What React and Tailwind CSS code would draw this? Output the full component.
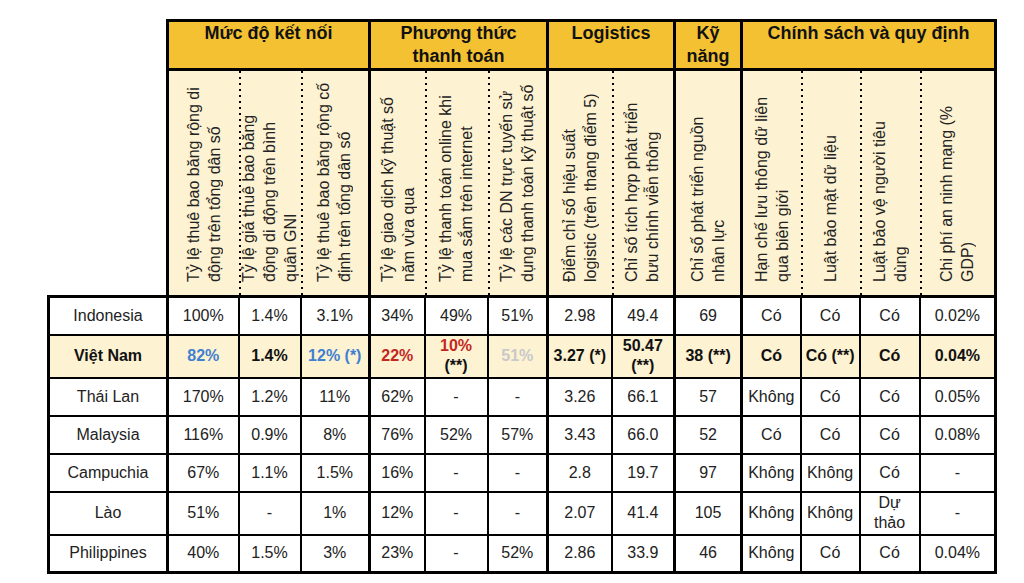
import React from "react";

const cols = [119, 71, 62, 69, 55, 63, 60, 64, 63, 67, 59, 59, 60, 76];
const thickLeft = new Set([1, 4, 7, 9, 10]);

const groups = [
  { label: ["Mức độ kết nối"], span: 3 },
  { label: ["Phương thức", "thanh toán"], span: 3 },
  { label: ["Logistics"], span: 2 },
  { label: ["Kỹ", "năng"], span: 1 },
  { label: ["Chính sách và quy định"], span: 4 },
];

const subs = [
  ["Tỷ lệ thuê bao băng rộng di", "động trên tổng dân số"],
  ["Tỷ lệ giá thuê bao băng", "động di động trên bình", "quân GNI"],
  ["Tỷ lệ thuê bao băng rộng cố", "định trên tổng dân số"],
  ["Tỷ lệ giao dịch kỹ thuật số", "năm vừa qua"],
  ["Tỷ lệ thanh toán online khi", "mua sắm trên internet"],
  ["Tỷ lệ các DN trực tuyến sử", "dụng thanh toán kỹ thuật số"],
  ["Điểm chỉ số hiệu suất", "logistic (trên thang điểm 5)"],
  ["Chỉ số tích hợp phát triển", "bưu chính viễn thông"],
  ["Chỉ số phát triển nguồn", "nhân lực"],
  ["Hạn chế lưu thông dữ liên", "qua biên giới"],
  ["Luật bảo mật dữ liệu"],
  ["Luật bảo vệ người tiêu", "dùng"],
  ["Chi phí an ninh mạng (%", "GDP)"],
];

const BLUE = "text-[#3f80d0]";
const RED = "text-[#c3271e]";

const rows = [
  { h: "h-[38px]", cells: ["Indonesia", "100%", "1.4%", "3.1%", "34%", "49%", "51%", "2.98", "49.4", "69", "Có", "Có", "Có", "0.02%"] },
  {
    h: "h-[43px]",
    vn: true,
    cells: [
      "Việt Nam",
      <span className={BLUE}>82%</span>,
      "1.4%",
      <span className={BLUE}>12% (*)</span>,
      <span className={RED}>22%</span>,
      <span className="block leading-[20px]">
        <span className={RED}>10%</span>
        <br />
        (**)
      </span>,
      <span className="text-[#c9c9c9]">51%</span>,
      "3.27 (*)",
      <span className="block leading-[20px]">
        50.47
        <br />
        (**)
      </span>,
      "38 (**)",
      "Có",
      "Có (**)",
      "Có",
      "0.04%",
    ],
  },
  { h: "h-[38px]", cells: ["Thái Lan", "170%", "1.2%", "11%", "62%", "-", "-", "3.26", "66.1", "57", "Không", "Có", "Có", "0.05%"] },
  { h: "h-[38px]", cells: ["Malaysia", "116%", "0.9%", "8%", "76%", "52%", "57%", "3.43", "66.0", "52", "Có", "Có", "Có", "0.08%"] },
  { h: "h-[38px]", cells: ["Campuchia", "67%", "1.1%", "1.5%", "16%", "-", "-", "2.8", "19.7", "97", "Không", "Không", "Có", "-"] },
  {
    h: "h-[43px]",
    cells: [
      "Lào", "51%", "-", "1%", "12%", "-", "-", "2.07", "41.4", "105", "Không", "Không",
      <span className="block leading-[20px]">
        Dự
        <br />
        thảo
      </span>,
      "-",
    ],
  },
  { h: "h-[38px]", cells: ["Philippines", "40%", "1.5%", "3%", "23%", "-", "52%", "2.86", "33.9", "46", "Không", "Có", "Có", "0.04%"] },
];

export default function App() {
  return (
    <div className="min-h-[583px] w-[1024px] bg-white pt-[19px] pl-[47px] font-['Liberation_Sans',Arial,sans-serif] text-[#222]">
      <table className="table-fixed border-collapse w-[947px]">
        <colgroup>
          {cols.map((w, i) => (
            <col key={i} style={{ width: w }} />
          ))}
        </colgroup>
        <thead>
          <tr className="h-[49px]">
            <td rowSpan={2} className="p-0"></td>
            {groups.map((g, i) => (
              <th
                key={i}
                colSpan={g.span}
                className="border-[3px] border-black bg-[#f4c133] p-0 align-top text-center text-[18px] font-bold leading-[23px] text-[#111]"
              >
                {g.label.map((l, j) => (
                  <div key={j}>{l}</div>
                ))}
              </th>
            ))}
          </tr>
          <tr className="h-[227px]">
            {subs.map((s, i) => {
              const ci = i + 1;
              const left = thickLeft.has(ci)
                ? "border-l-[3px] border-l-black border-solid"
                : "border-l-0 bg-[repeating-linear-gradient(to_bottom,#000_0_2px,transparent_2px_6px)] bg-[length:2px_100%] bg-no-repeat bg-left";
              const right = ci === 13 ? "border-r-[3px] border-r-black" : "";
              return (
                <td
                  key={i}
                  className={`${left} ${right} border-b-[3px] border-b-black bg-[#fdf2d1] p-0 pb-[13px] align-bottom`}
                >
                  <div className="flex justify-center">
                    <div className="h-[205px] whitespace-nowrap text-start text-[16px] font-normal leading-[21px] text-[#222] [writing-mode:vertical-rl] rotate-180">
                      {s.map((l, j) => (
                        <div key={j}>{l}</div>
                      ))}
                    </div>
                  </div>
                </td>
              );
            })}
          </tr>
        </thead>
        <tbody>
          {rows.map((r, ri) => (
            <tr key={ri} className={r.h}>
              {r.cells.map((c, ci) => {
                const left =
                  ci === 0 || thickLeft.has(ci)
                    ? "border-l-[3px]"
                    : "border-l-2";
                const right = ci === 13 ? "border-r-[3px]" : "";
                const top = ri === 0 ? "border-t-[3px]" : "border-t-2";
                const bottom = ri === rows.length - 1 ? "border-b-[3px]" : "border-b-2";
                return (
                  <td
                    key={ci}
                    className={`${left} ${right} ${top} ${bottom} border-solid border-black p-0 text-center align-middle text-[16px] leading-[20px] ${
                      r.vn ? "bg-[#fdf2d1] font-bold text-[#111]" : "bg-white"
                    }`}
                  >
                    {c}
                  </td>
                );
              })}
            </tr>
          ))}
        </tbody>
      </table>
    </div>
  );
}
